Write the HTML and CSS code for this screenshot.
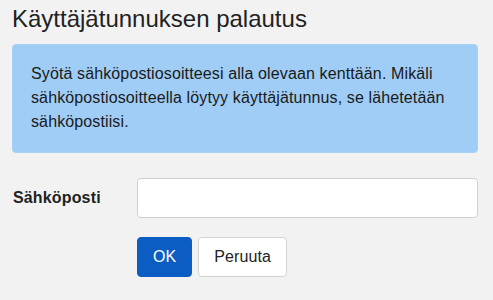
FILE: index.html
```html
<!DOCTYPE html>
<html lang="fi">
<head>
<meta charset="utf-8">
<title>Käyttäjätunnuksen palautus</title>
<link rel="stylesheet" href="styles.css">
</head>
<body>
<main class="page">
  <h1 class="title">Käyttäjätunnuksen palautus</h1>
  <div class="alert">Syötä sähköpostiosoitteesi alla olevaan kenttään. Mikäli sähköpostiosoitteella löytyy käyttäjätunnus, se lähetetään sähköpostiisi.</div>
  <form class="form">
    <div class="row">
      <label class="label" for="email">Sähköposti</label>
      <input class="input" id="email" type="email">
    </div>
    <div class="actions">
      <button type="button" class="btn btn-primary">OK</button>
      <button type="button" class="btn btn-default">Peruuta</button>
    </div>
  </form>
</main>
</body>
</html>
```

FILE: styles.css
```css
html, body {
  margin: 0;
  padding: 0;
  background: #f2f2f2;
}
body {
  font-family: "Liberation Sans", Arial, sans-serif;
  color: #222;
}
.page {
  padding: 6px 15px 0 12px;
}
.title {
  font-size: 24px;
  font-weight: normal;
  line-height: 26.4px;
  margin: 0 0 12px 0;
  color: #222;
}
.alert {
  background: #9fcdf6;
  border: 1px solid #a6d0f4;
  border-radius: 4px;
  padding: 17px 18px 18px 18px;
  font-size: 16px;
  line-height: 24px;
  letter-spacing: 0.12px;
  color: #1a1a1a;
}
.form {
  margin-top: 25px;
}
.row {
  display: flex;
  align-items: center;
}
.label {
  width: 125px;
  flex: none;
  font-size: 16px;
  font-weight: bold;
  letter-spacing: 0.15px;
  padding-left: 1px;
  box-sizing: border-box;
  color: #222;
}
.input {
  flex: 1;
  height: 40px;
  box-sizing: border-box;
  border: 1px solid #cfcfcf;
  border-radius: 4px;
  background: #fff;
  padding: 6px 12px;
  font-size: 16px;
  font-family: inherit;
  margin: 0;
}
.actions {
  display: flex;
  gap: 6px;
  margin-top: 19px;
  padding-left: 125px;
}
.btn {
  height: 40px;
  box-sizing: border-box;
  border-radius: 4px;
  padding: 0 15px;
  font-size: 16px;
  font-family: inherit;
  letter-spacing: 0.1px;
  line-height: 1;
  margin: 0;
}
.btn-primary {
  background: #0b5dc4;
  border: 1px solid #0b5dc4;
  color: #fff;
}
.btn-default {
  background: #fff;
  border: 1px solid #d4d4d4;
  color: #222;
}
```
